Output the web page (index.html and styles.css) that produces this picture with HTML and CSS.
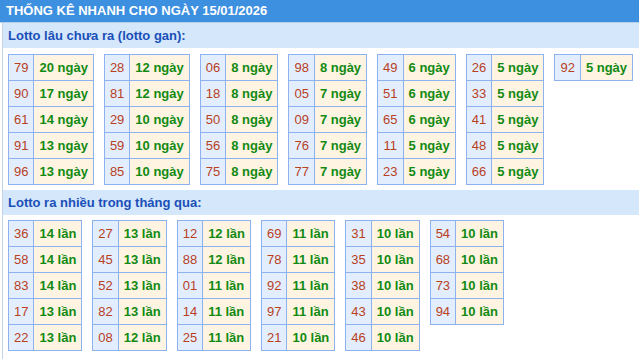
FILE: index.html
```html
<!DOCTYPE html>
<html lang="vi">
<head>
<meta charset="utf-8">
<title>Thống kê nhanh</title>
<link rel="stylesheet" href="styles.css">
</head>
<body>
<div class="title">THỐNG KÊ NHANH CHO NGÀY 15/01/2026</div>
<div class="box">
  <div class="sec-head">Lotto lâu chưa ra (lotto gan):</div>
  <div class="tables tables-first">
    <table class="lt"><tr><td class="n">79</td><td class="v">20 ngày</td></tr><tr><td class="n">90</td><td class="v">17 ngày</td></tr><tr><td class="n">61</td><td class="v">14 ngày</td></tr><tr><td class="n">91</td><td class="v">13 ngày</td></tr><tr><td class="n">96</td><td class="v">13 ngày</td></tr></table>
    <table class="lt"><tr><td class="n">28</td><td class="v">12 ngày</td></tr><tr><td class="n">81</td><td class="v">12 ngày</td></tr><tr><td class="n">29</td><td class="v">10 ngày</td></tr><tr><td class="n">59</td><td class="v">10 ngày</td></tr><tr><td class="n">85</td><td class="v">10 ngày</td></tr></table>
    <table class="lt"><tr><td class="n">06</td><td class="v">8 ngày</td></tr><tr><td class="n">18</td><td class="v">8 ngày</td></tr><tr><td class="n">50</td><td class="v">8 ngày</td></tr><tr><td class="n">56</td><td class="v">8 ngày</td></tr><tr><td class="n">75</td><td class="v">8 ngày</td></tr></table>
    <table class="lt"><tr><td class="n">98</td><td class="v">8 ngày</td></tr><tr><td class="n">05</td><td class="v">7 ngày</td></tr><tr><td class="n">09</td><td class="v">7 ngày</td></tr><tr><td class="n">76</td><td class="v">7 ngày</td></tr><tr><td class="n">77</td><td class="v">7 ngày</td></tr></table>
    <table class="lt"><tr><td class="n">49</td><td class="v">6 ngày</td></tr><tr><td class="n">51</td><td class="v">6 ngày</td></tr><tr><td class="n">65</td><td class="v">6 ngày</td></tr><tr><td class="n">11</td><td class="v">5 ngày</td></tr><tr><td class="n">23</td><td class="v">5 ngày</td></tr></table>
    <table class="lt"><tr><td class="n">26</td><td class="v">5 ngày</td></tr><tr><td class="n">33</td><td class="v">5 ngày</td></tr><tr><td class="n">41</td><td class="v">5 ngày</td></tr><tr><td class="n">48</td><td class="v">5 ngày</td></tr><tr><td class="n">66</td><td class="v">5 ngày</td></tr></table>
    <table class="lt"><tr><td class="n">92</td><td class="v">5 ngày</td></tr></table>
  </div>
  <div class="sec-head">Lotto ra nhiều trong tháng qua:</div>
  <div class="tables">
    <table class="lt"><tr><td class="n">36</td><td class="v">14 lần</td></tr><tr><td class="n">58</td><td class="v">14 lần</td></tr><tr><td class="n">83</td><td class="v">14 lần</td></tr><tr><td class="n">17</td><td class="v">13 lần</td></tr><tr><td class="n">22</td><td class="v">13 lần</td></tr></table>
    <table class="lt"><tr><td class="n">27</td><td class="v">13 lần</td></tr><tr><td class="n">45</td><td class="v">13 lần</td></tr><tr><td class="n">52</td><td class="v">13 lần</td></tr><tr><td class="n">82</td><td class="v">13 lần</td></tr><tr><td class="n">08</td><td class="v">12 lần</td></tr></table>
    <table class="lt"><tr><td class="n">12</td><td class="v">12 lần</td></tr><tr><td class="n">88</td><td class="v">12 lần</td></tr><tr><td class="n">01</td><td class="v">11 lần</td></tr><tr><td class="n">14</td><td class="v">11 lần</td></tr><tr><td class="n">25</td><td class="v">11 lần</td></tr></table>
    <table class="lt"><tr><td class="n">69</td><td class="v">11 lần</td></tr><tr><td class="n">78</td><td class="v">11 lần</td></tr><tr><td class="n">92</td><td class="v">11 lần</td></tr><tr><td class="n">97</td><td class="v">11 lần</td></tr><tr><td class="n">21</td><td class="v">10 lần</td></tr></table>
    <table class="lt"><tr><td class="n">31</td><td class="v">10 lần</td></tr><tr><td class="n">35</td><td class="v">10 lần</td></tr><tr><td class="n">38</td><td class="v">10 lần</td></tr><tr><td class="n">43</td><td class="v">10 lần</td></tr><tr><td class="n">46</td><td class="v">10 lần</td></tr></table>
    <table class="lt"><tr><td class="n">54</td><td class="v">10 lần</td></tr><tr><td class="n">68</td><td class="v">10 lần</td></tr><tr><td class="n">73</td><td class="v">10 lần</td></tr><tr><td class="n">94</td><td class="v">10 lần</td></tr></table>
  </div>
</div>
</body>
</html>
```

FILE: styles.css
```css
html, body {
  margin: 0;
  padding: 0;
  background: #ffffff;
}
body {
  font-family: "Liberation Sans", Arial, sans-serif;
  font-size: 13px;
  height: 359px;
  overflow: hidden;
}
.title {
  height: 22px;
  line-height: 22px;
  background: #3d8fe0;
  color: #ffffff;
  font-weight: bold;
  font-size: 13px;
  padding-left: 6px;
  border-bottom: 1px solid #b9cfe8;
  white-space: nowrap;
}
.box {
  margin-left: 2px;
  border-left: 1px solid #c3d3e6;
  min-height: 340px;
}
.sec-head {
  height: 25px;
  line-height: 25px;
  background: #d4e7fb;
  color: #1a4fb8;
  font-weight: bold;
  font-size: 13px;
  padding-left: 5px;
}
.tables {
  display: flex;
  flex-wrap: wrap;
  align-items: flex-start;
  gap: 10px;
  padding: 5px 0 5px 5px;
}
.tables-first {
  padding-top: 6px;
}
.lt {
  border-collapse: collapse;
}
.lt td {
  border: 1px solid #8db2ef;
  height: 15px;
  line-height: 15px;
  padding: 5px 5px;
  font-size: 13px;
  white-space: nowrap;
}
.lt .n {
  background: #e2eefd;
  color: #b8401f;
  text-align: center;
}
.lt .v {
  background: #fff4e2;
  color: #128a12;
  font-weight: bold;
}
```
